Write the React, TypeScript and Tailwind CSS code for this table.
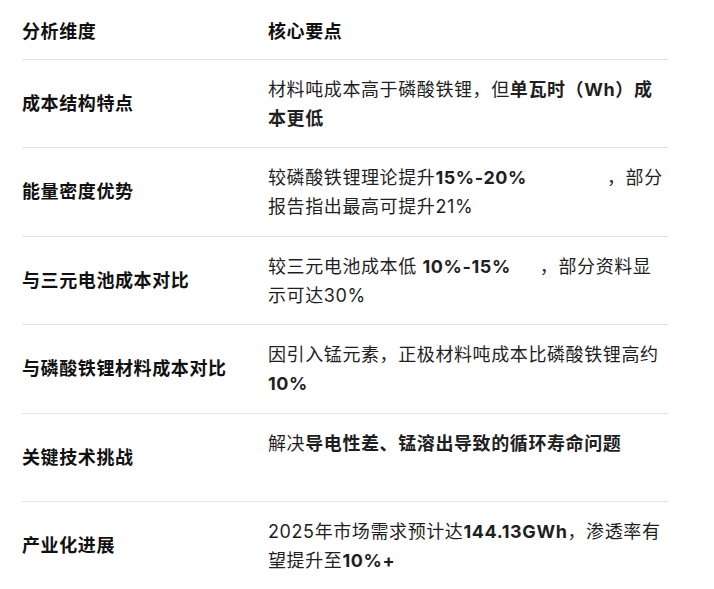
import React from 'react';

type Row = { label: string; content: React.ReactNode };

const rows: Row[] = [
  {
    label: '成本结构特点',
    content: (
      <>
        材料吨成本高于磷酸铁锂，但<b className="font-bold">单瓦时（Wh）成本更低</b>
      </>
    ),
  },
  {
    label: '能量密度优势',
    content: (
      <>
        较磷酸铁锂理论提升<b className="font-bold">15%-20%</b>
        <span className="inline-block w-[80px]" />，部分报告指出最高可提升21%
      </>
    ),
  },
  {
    label: '与三元电池成本对比',
    content: (
      <>
        较三元电池成本低 <b className="font-bold">10%-15%</b>
        <span className="inline-block w-[29px]" />，部分资料显示可达30%
      </>
    ),
  },
  {
    label: '与磷酸铁锂材料成本对比',
    content: (
      <>
        因引入锰元素，正极材料吨成本比磷酸铁锂高约<b className="font-bold">10%</b>
      </>
    ),
  },
  {
    label: '关键技术挑战',
    content: (
      <>
        解决<b className="font-bold">导电性差、锰溶出导致的循环寿命问题</b>
      </>
    ),
  },
  {
    label: '产业化进展',
    content: (
      <>
        2025年市场需求预计达<b className="font-bold">144.13GWh</b>，渗透率有望提升至
        <b className="font-bold">10%+</b>
      </>
    ),
  },
];

const App: React.FC = () => {
  return (
    <div
      className="w-[714px] h-[589px] overflow-hidden bg-white text-[#1f1f1f] text-[18px] tracking-[0.6px]"
      style={{ fontFamily: 'Inter, "Noto Sans CJK SC", sans-serif' }}
    >
      <div className="ml-[22px] w-[646px]">
        <div className="flex border-b border-[#e3e3e3] pt-[16.5px] pb-[13px] leading-[29px] font-bold text-[#111]">
          <div className="w-[246px] shrink-0">分析维度</div>
          <div className="flex-1">核心要点</div>
        </div>

        {rows.map((row, i) => (
          <div
            key={row.label}
            className={
              i < rows.length - 1
                ? 'flex border-b border-[#e3e3e3]'
                : 'flex'
            }
          >
            <div className="w-[246px] shrink-0 flex items-center font-bold text-[#111]">
              {row.label}
            </div>
            <div className="flex-1 pt-[15px] pb-[14.5px] leading-[29px]">
              <div className="min-h-[58px]">{row.content}</div>
            </div>
          </div>
        ))}
      </div>
    </div>
  );
};

export default App;
